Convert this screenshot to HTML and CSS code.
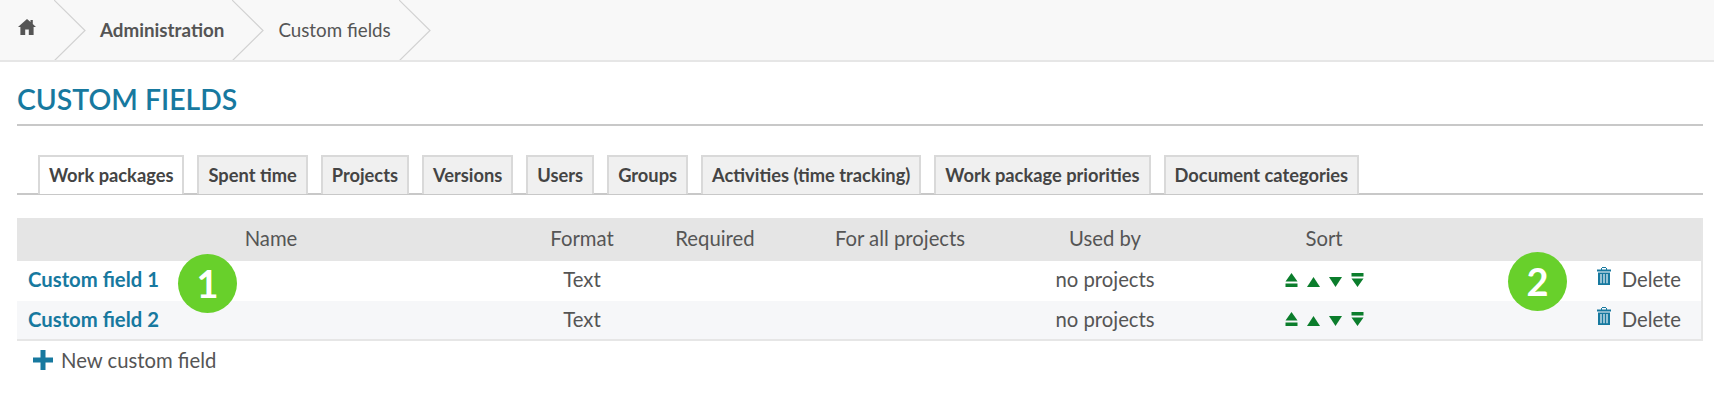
FILE: index.html
```html
<!DOCTYPE html>
<html lang="en">
<head>
    <meta charset="UTF-8">
    <title>Custom fields</title>
    <link rel="stylesheet" href="styles.css">
</head>
<body>
    <svg class="defs" width="0" height="0">
        <symbol id="chevron" viewBox="0 0 32 61"><path d="M0 0 L31 30.5 L0 61" fill="none" stroke="#d2d2d2" stroke-width="1.2"/></symbol>
        <symbol id="home" viewBox="0 0 18 16"><path d="M9 0 L12.5 3 V1 H14.8 V5 L18 8 H15.6 V16 H10.8 V10.5 H7.2 V16 H2.4 V8 H0 Z" fill="#555"/></symbol>
        <symbol id="trash" viewBox="0 0 14 18"><path d="M5 0 H9 V0.9 H5 Z M4 0.9 H5 V2.6 H9 V0.9 H10 V2.6 H14 V4.6 H0 V2.6 H4 Z M1 5.4 H13 V18 H1 Z" fill="#17799f"/><path d="M4 7 V16.2 M7 7 V16.2 M10 7 V16.2" stroke="#fff" stroke-width="1.1"/></symbol>
        <symbol id="top" viewBox="0 0 13 14"><path d="M6.5 0 L12.5 8.5 H0.5 Z M0.5 10.5 H12.5 V14 H0.5 Z" fill="#0b7d2c"/></symbol>
        <symbol id="up" viewBox="0 0 13 10"><path d="M6.5 0 L13 10 H0 Z" fill="#0b7d2c"/></symbol>
        <symbol id="down" viewBox="0 0 13 10"><path d="M0 0 H13 L6.5 10 Z" fill="#0b7d2c"/></symbol>
        <symbol id="bottom" viewBox="0 0 13 14"><path d="M0.5 0 H12.5 V3.5 H0.5 Z M0.5 5.5 H12.5 L6.5 14 Z" fill="#0b7d2c"/></symbol>
    </svg>

    <nav class="breadcrumb">
        <a class="crumb-home" href="#"><svg width="18" height="16"><use href="#home"/></svg></a>
        <svg class="chevron"><use href="#chevron"/></svg>
        <a class="crumb crumb-bold" href="#">Administration</a>
        <svg class="chevron"><use href="#chevron"/></svg>
        <span class="crumb">Custom fields</span>
        <svg class="chevron"><use href="#chevron"/></svg>
    </nav>

    <main class="content">
        <h1 class="title">CUSTOM FIELDS</h1>

        <ul class="tabs">
            <li class="tab active">Work packages</li>
            <li class="tab">Spent time</li>
            <li class="tab">Projects</li>
            <li class="tab">Versions</li>
            <li class="tab">Users</li>
            <li class="tab">Groups</li>
            <li class="tab">Activities (time tracking)</li>
            <li class="tab">Work package priorities</li>
            <li class="tab">Document categories</li>
        </ul>

        <table class="fields">
            <colgroup>
                <col class="col-name"><col class="col-format"><col class="col-required"><col class="col-all"><col class="col-used"><col class="col-sort"><col>
            </colgroup>
            <thead>
                <tr><th>Name</th><th>Format</th><th>Required</th><th>For all projects</th><th>Used by</th><th>Sort</th><th></th></tr>
            </thead>
            <tbody>
                <tr class="odd">
                    <td class="name"><a href="#">Custom field 1</a></td>
                    <td>Text</td><td></td><td></td><td>no projects</td>
                    <td><div class="sort">
                        <svg width="13" height="14"><use href="#top"/></svg>
                        <svg width="13" height="10"><use href="#up"/></svg>
                        <svg width="13" height="10"><use href="#down"/></svg>
                        <svg width="13" height="14"><use href="#bottom"/></svg>
                    </div></td>
                    <td class="actions"><svg width="14" height="18"><use href="#trash"/></svg>Delete</td>
                </tr>
                <tr class="even">
                    <td class="name"><a href="#">Custom field 2</a></td>
                    <td>Text</td><td></td><td></td><td>no projects</td>
                    <td><div class="sort">
                        <svg width="13" height="14"><use href="#top"/></svg>
                        <svg width="13" height="10"><use href="#up"/></svg>
                        <svg width="13" height="10"><use href="#down"/></svg>
                        <svg width="13" height="14"><use href="#bottom"/></svg>
                    </div></td>
                    <td class="actions"><svg width="14" height="18"><use href="#trash"/></svg>Delete</td>
                </tr>
            </tbody>
        </table>

        <a class="new-field" href="#">
            <svg width="20" height="20" viewBox="0 0 20 20"><path d="M7.5 0 H12.5 V7.5 H20 V12.5 H12.5 V20 H7.5 V12.5 H0 V7.5 H7.5 Z" fill="#17799f"/></svg>
            New custom field
        </a>
    </main>

    <!-- callouts over the table -->
    <span class="badge badge-one">1</span>
    <span class="badge badge-two">2</span>
</body>
</html>
```

FILE: styles.css
```css
* {
    box-sizing: border-box;
}

body {
    margin: 0;
    font-family: Lato, "Open Sans", sans-serif;
    font-size: 20.3px;
    color: #555;
    background: #fff;
    position: relative;
    height: 407px;
    overflow: hidden;
}

a {
    color: inherit;
    text-decoration: none;
}

.defs {
    position: absolute;
}

/* Breadcrumb bar */
.breadcrumb {
    display: flex;
    align-items: center;
    height: 62px;
    padding: 0 0 2px 18px;
    background: #f8f8f8;
    border-bottom: 2px solid #e6e6e6;
    overflow: hidden;
    font-size: 18.8px;
}

.crumb-home {
    display: flex;
    margin-top: -5px;
    margin-right: 18px;
}

.chevron {
    width: 32px;
    height: 61px;
    flex: none;
    margin-top: 3px;
}

.crumb {
    margin: 0 8px 0 14px;
}

.crumb-bold {
    font-weight: 700;
}

/* Page content */
.content {
    padding: 0 11px 0 17px;
}

.title {
    margin: 0;
    height: 64px;
    padding-top: 21px;
    font-size: 28.4px;
    font-weight: 600;
    line-height: 32px;
    color: #17799f;
    border-bottom: 2px solid #c8c8c8;
}

.tabs {
    display: flex;
    gap: 13px;
    margin: 29px 0 0;
    padding: 0 0 0 21px;
    list-style: none;
    border-bottom: 2px solid #c8c8c8;
}

.tab {
    height: 39px;
    margin-bottom: -1px;
    padding: 0 9px;
    line-height: 37px;
    font-size: 18.3px;
    font-weight: 700;
    color: #444;
    background: #f0f0f0;
    border: 2px solid #d9d9d9;
    border-bottom: none;
}

.tab.active {
    background: #fff;
}

/* Table */
.fields {
    width: 100%;
    margin-top: 23px;
    border-collapse: collapse;
    table-layout: fixed;
    border-right: 2px solid #e6e6e6;
    border-bottom: 2px solid #e6e6e6;
}

.col-name { width: 508px; }
.col-format { width: 114px; }
.col-required { width: 152px; }
.col-all { width: 218px; }
.col-used { width: 192px; }
.col-sort { width: 246px; }

.fields th {
    height: 43px;
    padding-bottom: 4px;
    font-weight: 400;
    background: #e5e5e5;
    text-align: center;
}

.fields td {
    height: 39px;
    padding: 0 0 3px;
    text-align: center;
}

.fields .odd td {
    height: 40px;
    padding-bottom: 5px;
}

.fields .even td {
    background: #f6f7f9;
}

.fields .name {
    padding-left: 11px;
    text-align: left;
    font-weight: 700;
    color: #17799f;
}

.sort {
    display: flex;
    justify-content: center;
    align-items: flex-end;
    gap: 9px;
}

.fields .odd .sort {
    margin-top: 3px;
}

.fields .actions {
    padding-right: 20px;
    text-align: right;
}

.actions svg {
    margin-right: 11px;
    vertical-align: 2px;
}

.new-field {
    display: flex;
    align-items: center;
    gap: 8px;
    margin: 7px 0 0 16px;
}

/* Numbered callouts */
.badge {
    position: absolute;
    width: 59px;
    height: 59px;
    border-radius: 50%;
    background: #68d02b;
    color: #fff;
    font-size: 38px;
    font-weight: 700;
    line-height: 59px;
    text-align: center;
}

.badge-one {
    left: 178px;
    top: 254px;
}

.badge-two {
    left: 1508px;
    top: 252px;
}
```
